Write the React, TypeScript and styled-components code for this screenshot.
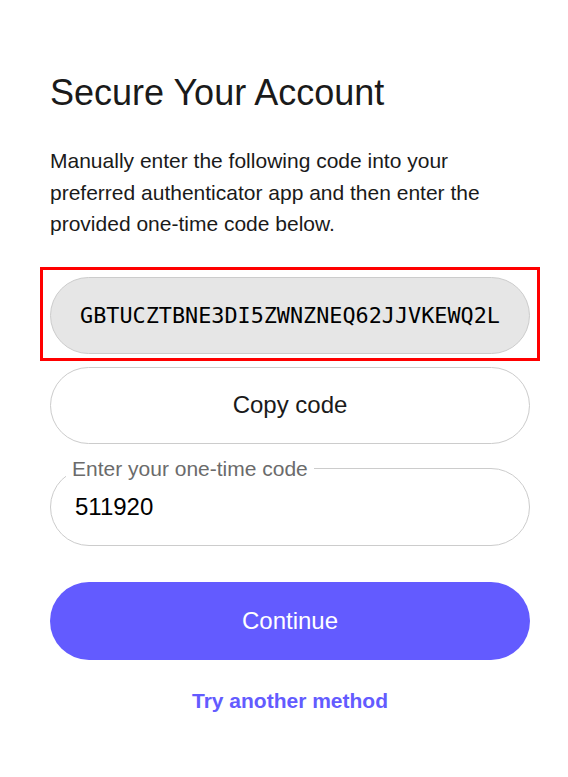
import React from "react";
import styled, { createGlobalStyle } from "styled-components";

const Global = createGlobalStyle`
  html, body { margin: 0; padding: 0; background: #ffffff; }
  body { font-family: "Liberation Sans", Arial, sans-serif; color: #1a1a1a; }
  * { box-sizing: border-box; }
`;

const Page = styled.main`
  width: 480px;
  margin-left: 50px;
  padding-top: 72px;
  display: flex;
  flex-direction: column;
`;

const Title = styled.h1`
  margin: 0;
  font-size: 36px;
  font-weight: 400;
  line-height: 41px;
  color: #1a1a1a;
`;

const Intro = styled.p`
  margin: 32px 0 0;
  font-size: 21px;
  line-height: 31.5px;
  color: #1a1a1a;
`;

const Highlight = styled.div`
  margin: 27px -10px 0;
  border: 3px solid #ff0000;
  padding: 7px 7px 4px;
`;

const Pill = styled.div<{ $variant: "code" | "plain" }>`
  height: 77px;
  border-radius: 39px;
  border: 1px solid #cccccc;
  background: ${(p) => (p.$variant === "code" ? "#e6e6e6" : "#ffffff")};
  display: flex;
  align-items: center;
  justify-content: center;
  color: #1a1a1a;
`;

const CodeText = styled.span`
  font-family: "DejaVu Sans Mono", "Liberation Mono", monospace;
  font-size: 21.8px;
  color: #000000;
`;

const CopyButton = styled(Pill).attrs({ as: "button" })`
  width: 100%;
  margin-top: 6px;
  font-family: "Liberation Sans", Arial, sans-serif;
  font-size: 24px;
  cursor: pointer;
`;

const Field = styled.fieldset`
  margin: 13px 0 0;
  padding: 0 24px 11px;
  border: 1px solid #cccccc;
  border-radius: 39px;
`;

const Legend = styled.legend`
  margin-left: -9px;
  padding: 0 6px;
  font-size: 21px;
  line-height: 24px;
  color: #6b6b6b;
`;

const CodeInput = styled.input`
  display: block;
  width: 100%;
  height: 53px;
  border: none;
  outline: none;
  background: transparent;
  padding: 0;
  margin: 0;
  font-family: "Liberation Sans", Arial, sans-serif;
  font-size: 24px;
  color: #000000;
`;

const Continue = styled.button`
  margin-top: 36px;
  height: 78px;
  border: none;
  border-radius: 39px;
  background: #635bff;
  color: #ffffff;
  font-family: "Liberation Sans", Arial, sans-serif;
  font-size: 24px;
  cursor: pointer;
`;

const AltLink = styled.a`
  margin-top: 29px;
  align-self: center;
  font-size: 21px;
  font-weight: 700;
  color: #635bff;
  text-decoration: none;
  cursor: pointer;
`;

export default function App() {
  return (
    <>
      <Global />
      <Page>
        <Title>Secure Your Account</Title>
        <Intro>
          Manually enter the following code into your preferred authenticator app and then enter the
          provided one-time code below.
        </Intro>
        <Highlight>
          <Pill $variant="code">
            <CodeText>GBTUCZTBNE3DI5ZWNZNEQ62JJVKEWQ2L</CodeText>
          </Pill>
        </Highlight>
        <CopyButton $variant="plain">Copy code</CopyButton>
        <Field>
          <Legend>Enter your one-time code</Legend>
          <CodeInput defaultValue="511920" />
        </Field>
        <Continue>Continue</Continue>
        <AltLink>Try another method</AltLink>
      </Page>
    </>
  );
}
